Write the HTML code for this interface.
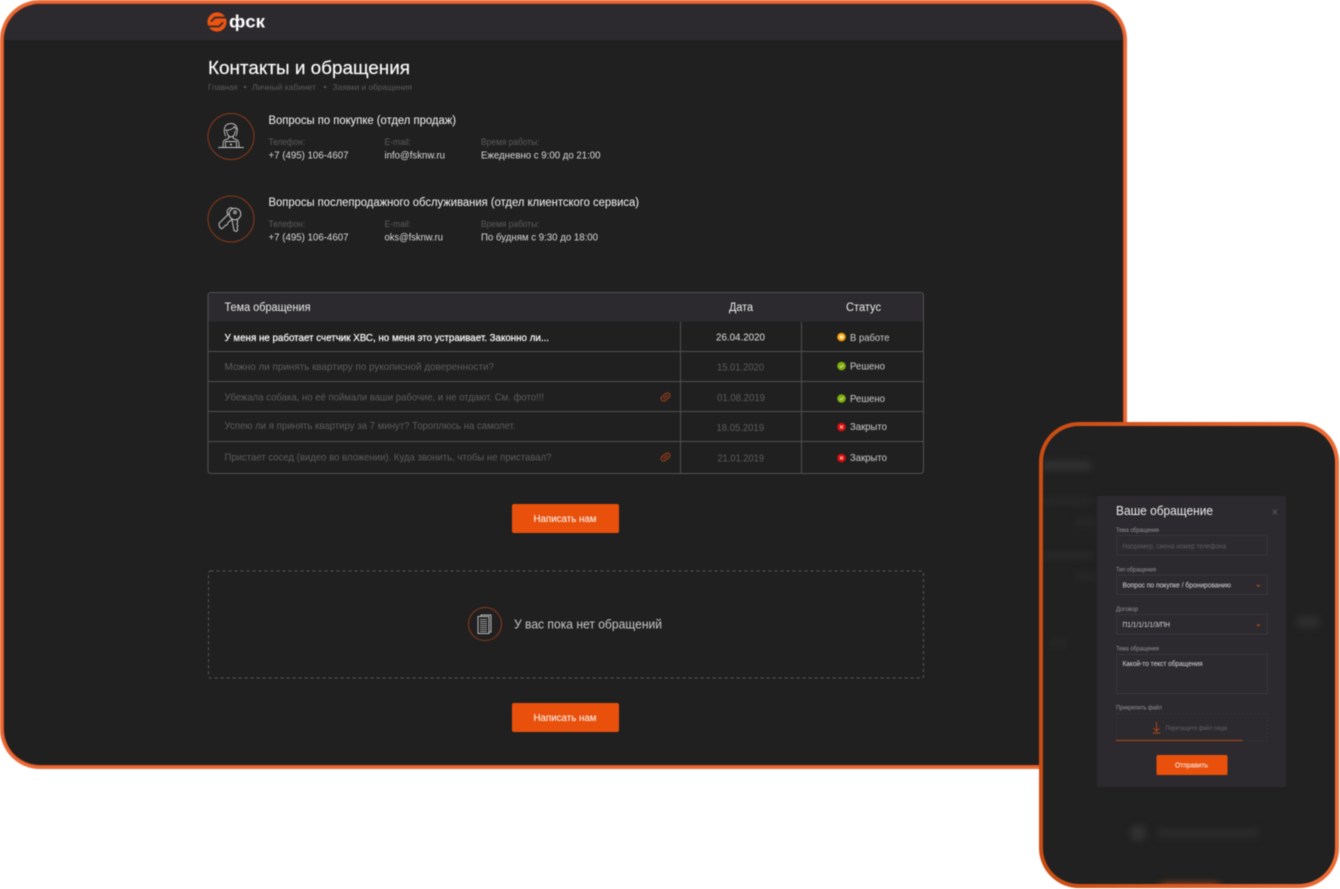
<!DOCTYPE html>
<html lang="ru"><head><meta charset="utf-8"><title>Контакты и обращения</title>
<style>
html,body{margin:0;padding:0;background:#fff;width:1340px;height:889px;overflow:hidden}
svg{display:block;position:absolute;left:0;top:0}
text{font-family:"Liberation Sans",sans-serif}
</style></head><body>
<svg width="1340" height="889" viewBox="0 0 1340 889" xmlns="http://www.w3.org/2000/svg">
<defs>
<filter id="b3" x="-50%" y="-200%" width="200%" height="500%" color-interpolation-filters="sRGB"><feGaussianBlur stdDeviation="3.500"/></filter>
<filter id="b5" x="-50%" y="-200%" width="200%" height="500%" color-interpolation-filters="sRGB"><feGaussianBlur stdDeviation="4"/></filter>
<filter id="s" x="-2%" y="-2%" width="104%" height="104%" color-interpolation-filters="sRGB"><feGaussianBlur stdDeviation="0.4"/></filter>
<clipPath id="mainClip"><rect x="4" y="4" width="1119" height="761" rx="36"/></clipPath>
<clipPath id="phoneClip"><rect x="1043" y="426" width="292" height="458" rx="36"/></clipPath>
<linearGradient id="pb" x1="0" y1="0" x2="1" y2="0"><stop offset="0" stop-color="#c94c12"/><stop offset="1" stop-color="#ee6a35"/></linearGradient>
</defs>
<g filter="url(#s)">
<!-- main frame -->
<rect x="0" y="0" width="1127" height="769" rx="40" fill="#ea6a38"/>
<rect x="3" y="3" width="1121" height="763" rx="37" fill="#d5531c"/>
<rect x="4" y="4" width="1119" height="761" rx="36" fill="#202020"/>
<g clip-path="url(#mainClip)"><rect x="0" y="0" width="1127" height="40" fill="#2c2a2e"/></g>

<!-- logo -->
<circle cx="217" cy="22" r="9.600" fill="#ec5410"/>
<path d="M228 17.500H215L211 21.500M206 26.500H219L223 22.500" fill="none" stroke="#2c2a2e" stroke-width="1.800"/>
<text x="229" y="27.500" font-size="17.500" font-weight="700" fill="#fff" textLength="36" lengthAdjust="spacingAndGlyphs">фск</text>

<!-- heading -->
<text x="208" y="74" font-size="18.500" fill="#fff" stroke="#fff" stroke-width=".15" textLength="202" lengthAdjust="spacingAndGlyphs">Контакты и обращения</text>
<g font-size="8.500" fill="#5a5a5a">
<text x="208" y="90" textLength="29.500" lengthAdjust="spacingAndGlyphs">Главная</text>
<circle cx="245" cy="87" r="1.200" stroke="none"/>
<text x="252" y="90" textLength="64" lengthAdjust="spacingAndGlyphs">Личный кабинет</text>
<circle cx="325" cy="87" r="1.200" stroke="none"/>
<text x="332.500" y="90" textLength="79.500" lengthAdjust="spacingAndGlyphs">Заявки и обращения</text>
</g>

<!-- contact 1 -->
<circle cx="231" cy="136.500" r="23" fill="none" stroke="#8c3a17" stroke-width="1"/>
<g fill="none" stroke="#c4c4c4" stroke-width=".9" stroke-linecap="round" stroke-linejoin="round">
<path d="M218.500 147.500H243.500"/>
<path d="M225.500 136C223 130 224 123.500 231 123.500C237.500 123.500 238.500 130 236 136"/>
<path d="M225.500 130C229.500 130.500 233 129 234.500 126.500C235.500 128.500 236.500 129.500 237 130"/>
<path d="M226.800 131C227 134.500 228.800 137 231 137C233.200 137 235 134.500 235.200 131"/>
<path d="M228.800 136.800V138.300L225 139.800C223.500 140.500 223 141.500 223 147.500M233.200 136.800V138.300L237 139.800C238.500 140.500 239 141.500 239 147.500"/>
<path d="M225.500 147.500V141.500H236.500V147.500"/>
<path d="M230.200 144.500H231.800M231 143.700V145.300"/>
</g>
<text x="268.500" y="124" font-size="11.500" fill="#f6f6f6" textLength="187.500" lengthAdjust="spacingAndGlyphs">Вопросы по покупке (отдел продаж)</text>
<g font-size="9" fill="#5c5c5c">
<text x="268.500" y="145" textLength="36.500" lengthAdjust="spacingAndGlyphs">Телефон:</text>
<text x="384.500" y="145" textLength="26.500" lengthAdjust="spacingAndGlyphs">E-mail:</text>
<text x="481" y="145" textLength="58.500" lengthAdjust="spacingAndGlyphs">Время работы:</text>
</g>
<g font-size="10.500" fill="#dadada">
<text x="268.500" y="158.500" textLength="80" lengthAdjust="spacingAndGlyphs">+7 (495) 106-4607</text>
<text x="384.500" y="158.500" textLength="60.500" lengthAdjust="spacingAndGlyphs">info@fsknw.ru</text>
<text x="481" y="158.500" textLength="119.500" lengthAdjust="spacingAndGlyphs">Ежедневно с 9:00 до 21:00</text>
</g>

<!-- contact 2 -->
<circle cx="231" cy="219" r="23" fill="none" stroke="#8c3a17" stroke-width="1"/>
<g fill="none" stroke="#c4c4c4" stroke-width="1" stroke-linecap="round" stroke-linejoin="round">
<path d="M228.500 214L219 223.500L219.500 227L221.500 228.800L223.500 227.500L225 225.500L227 225L228 222.500L231 220"/>
<path d="M227.500 214C226 209.500 230 206.500 233 208.500"/>
<circle cx="235" cy="214" r="5.800"/>
<circle cx="235" cy="212.300" r="1.300"/>
<path d="M231.800 219L234 230.500L236.500 231.500L237.800 229.800L237 227.500L238 226L236.800 224L237.600 222.500L237.500 219.300"/>
</g>
<text x="268.500" y="206" font-size="11.500" fill="#f6f6f6" textLength="370.500" lengthAdjust="spacingAndGlyphs">Вопросы послепродажного обслуживания (отдел клиентского сервиса)</text>
<g font-size="9" fill="#5c5c5c">
<text x="268.500" y="227" textLength="36.500" lengthAdjust="spacingAndGlyphs">Телефон:</text>
<text x="384.500" y="227" textLength="26.500" lengthAdjust="spacingAndGlyphs">E-mail:</text>
<text x="481" y="227" textLength="58.500" lengthAdjust="spacingAndGlyphs">Время работы:</text>
</g>
<g font-size="10.500" fill="#dadada">
<text x="268.500" y="240.500" textLength="80" lengthAdjust="spacingAndGlyphs">+7 (495) 106-4607</text>
<text x="384.500" y="240.500" textLength="58.500" lengthAdjust="spacingAndGlyphs">oks@fsknw.ru</text>
<text x="481" y="240.500" textLength="117" lengthAdjust="spacingAndGlyphs">По будням с 9:30 до 18:00</text>
</g>

<!-- table -->
<path d="M208.500 321.500V296a3 3 0 0 1 3-3H920a3 3 0 0 1 3 3v25.500Z" fill="#2c2a2e"/>
<rect x="208" y="292.500" width="715.500" height="181" rx="3" fill="none" stroke="#525252" stroke-width="1"/>
<path d="M208.500 351.500H923.500M208.500 381.500H923.500M208.500 411.500H923.500M208.500 441.500H923.500M680.500 322V473M801.500 322V473" stroke="#505050" stroke-width="1" fill="none"/>
<g font-size="11.500" fill="#ececec">
<text x="224.500" y="311" textLength="86" lengthAdjust="spacingAndGlyphs">Тема обращения</text>
<text x="729" y="311" textLength="24" lengthAdjust="spacingAndGlyphs">Дата</text>
<text x="846" y="311" textLength="35" lengthAdjust="spacingAndGlyphs">Статус</text>
</g>
<text x="224.500" y="341" font-size="10.500" fill="#fff" stroke="#fff" stroke-width=".2" textLength="324.500" lengthAdjust="spacingAndGlyphs">У меня не работает счетчик ХВС, но меня это устраивает. Законно ли...</text>
<g font-size="10.500" fill="#5c5c5c">
<text x="224.500" y="370" textLength="269.500" lengthAdjust="spacingAndGlyphs">Можно ли принять квартиру по рукописной доверенности?</text>
<text x="224.500" y="400.500" textLength="319.500" lengthAdjust="spacingAndGlyphs">Убежала собака, но её поймали ваши рабочие, и не отдают. См. фото!!!</text>
<text x="224.500" y="429" textLength="291" lengthAdjust="spacingAndGlyphs">Успею ли я принять квартиру за 7 минут? Тороплюсь на самолет.</text>
<text x="224.500" y="460.500" textLength="327" lengthAdjust="spacingAndGlyphs">Пристает сосед (видео во вложении). Куда звонить, чтобы не приставал?</text>
<text x="717" y="370.500" textLength="47" lengthAdjust="spacingAndGlyphs">15.01.2020</text>
<text x="717" y="401" textLength="48" lengthAdjust="spacingAndGlyphs">01.08.2019</text>
<text x="716.500" y="431" textLength="47.500" lengthAdjust="spacingAndGlyphs">18.05.2019</text>
<text x="717.500" y="461.500" textLength="46.500" lengthAdjust="spacingAndGlyphs">21.01.2019</text>
</g>
<text x="716" y="340.500" font-size="10.500" fill="#e0e0e0" textLength="49" lengthAdjust="spacingAndGlyphs">26.04.2020</text>
<!-- clips -->
<g fill="none" stroke="#8a3a18" stroke-width="1.400">
<g transform="rotate(-40 665.500 397)"><rect x="660.500" y="394.500" width="10" height="5" rx="2.500"/><path d="M662.800 397H668.500"/></g>
<g transform="rotate(-40 665.500 457)"><rect x="660.500" y="454.500" width="10" height="5" rx="2.500"/><path d="M662.800 457H668.500"/></g>
</g>
<!-- statuses -->
<circle cx="841.500" cy="337" r="4.300" fill="#f5a20a"/><circle cx="841.500" cy="337" r="2" fill="#ffe9b8"/>
<circle cx="841.500" cy="366" r="4.300" fill="#7fae0e"/><path d="M839.800 366.200L841 367.400L843.300 364.800" fill="none" stroke="#dbe9b0" stroke-width=".9"/>
<circle cx="841.500" cy="398.500" r="4.300" fill="#7fae0e"/><path d="M839.800 398.700L841 399.900L843.300 397.300" fill="none" stroke="#dbe9b0" stroke-width=".9"/>
<circle cx="841.500" cy="427" r="4.300" fill="#d90d0d"/><path d="M840 425.500L843 428.500M843 425.500L840 428.500" stroke="#f6c8c8" stroke-width=".9"/>
<circle cx="841.500" cy="458" r="4.300" fill="#d90d0d"/><path d="M840 456.500L843 459.500M843 456.500L840 459.500" stroke="#f6c8c8" stroke-width=".9"/>
<g font-size="10.500" fill="#cccccc">
<text x="850" y="341" textLength="39.500" lengthAdjust="spacingAndGlyphs">В работе</text>
<text x="850" y="369.500" textLength="35" lengthAdjust="spacingAndGlyphs">Решено</text>
<text x="850" y="402" textLength="35" lengthAdjust="spacingAndGlyphs">Решено</text>
<text x="850" y="430" textLength="37" lengthAdjust="spacingAndGlyphs">Закрыто</text>
<text x="850" y="461" textLength="37" lengthAdjust="spacingAndGlyphs">Закрыто</text>
</g>

<!-- buttons -->
<rect x="512" y="504" width="107" height="29" rx="2" fill="#e8500c"/>
<text x="533.500" y="522" font-size="10" fill="#fff" textLength="63" lengthAdjust="spacingAndGlyphs">Написать нам</text>
<rect x="512" y="703" width="107" height="29" rx="2" fill="#e8500c"/>
<text x="533.500" y="721" font-size="10" fill="#fff" textLength="63" lengthAdjust="spacingAndGlyphs">Написать нам</text>

<!-- empty box -->
<rect x="208.500" y="571" width="715" height="107" rx="2" fill="none" stroke="#585858" stroke-width="1" stroke-dasharray="3 3"/>
<circle cx="485" cy="624" r="16.500" fill="none" stroke="#8c3a17" stroke-width="1"/>
<g fill="none" stroke="#b8b8b8" stroke-width="1">
<path d="M481 616.500V615H491V632H489"/>
<rect x="478" y="616.500" width="11" height="17"/>
<path d="M480 619.500H487M480 621.500H487M480 623.500H487M480 625.500H487M480 627.500H487M480 629.500H487M480 631.500H487" stroke-width=".8"/>
</g>
<text x="514" y="628.500" font-size="12.500" fill="#c8c8c8" textLength="148" lengthAdjust="spacingAndGlyphs">У вас пока нет обращений</text>

<!-- phone -->
<rect x="1039" y="422" width="300" height="466" rx="40" fill="url(#pb)"/>
<rect x="1043" y="426" width="292" height="458" rx="36" fill="#212121"/>
<g clip-path="url(#phoneClip)">
<rect x="1043" y="461" width="48" height="9" fill="#323232" filter="url(#b3)"/>
<rect x="1043" y="499" width="50" height="5" fill="#2a2a2a" filter="url(#b3)"/>
<rect x="1075" y="519" width="22" height="6" fill="#292929" filter="url(#b3)"/>
<rect x="1043" y="553" width="50" height="5" fill="#2c2c2c" filter="url(#b3)"/>
<rect x="1075" y="574" width="22" height="6" fill="#292929" filter="url(#b3)"/>
<rect x="1050" y="640" width="16" height="6" fill="#292929" filter="url(#b3)"/>
<rect x="1296" y="616" width="24" height="12" rx="6" fill="#2e2e2e" filter="url(#b3)"/>
<circle cx="1138" cy="833" r="8" fill="#323232" filter="url(#b3)"/>
<rect x="1158" y="829" width="100" height="8" fill="#2c2c2c" filter="url(#b3)"/>
<rect x="1160" y="884" width="60" height="12" rx="4" fill="#b04a1a" filter="url(#b5)"/>
</g>

<!-- modal -->
<rect x="1097" y="496" width="189" height="291" rx="2" fill="#2c2a2e"/>
<text x="1116" y="515" font-size="12.500" fill="#ececec" textLength="97" lengthAdjust="spacingAndGlyphs">Ваше обращение</text>
<path d="M1272.700 509.700L1277.300 514.300M1277.300 509.700L1272.700 514.300" stroke="#5d5b5f" stroke-width=".9"/>
<g font-size="6" fill="#969498">
<text x="1116" y="532" textLength="43" lengthAdjust="spacingAndGlyphs">Тема обращения</text>
<text x="1116" y="571.500" textLength="40" lengthAdjust="spacingAndGlyphs">Тип обращения</text>
<text x="1116" y="611" textLength="22" lengthAdjust="spacingAndGlyphs">Договор</text>
<text x="1116" y="650.500" textLength="43" lengthAdjust="spacingAndGlyphs">Тема обращения</text>
<text x="1116" y="709.500" textLength="46" lengthAdjust="spacingAndGlyphs">Прикрепить файл</text>
</g>
<g fill="none" stroke="#38363a" stroke-width="1">
<rect x="1116.500" y="535.500" width="151" height="19.500" rx="1"/>
<rect x="1116.500" y="575" width="151" height="19.500" rx="1"/>
<rect x="1116.500" y="614.500" width="151" height="19.500" rx="1"/>
<rect x="1116.500" y="654.500" width="151" height="39" rx="1"/>
<rect x="1116.500" y="713.500" width="151" height="27" rx="1" stroke-dasharray="2 2"/>
</g>
<text x="1122.500" y="548.500" font-size="7" fill="#5e5c60" textLength="103.500" lengthAdjust="spacingAndGlyphs">Например, смена номер телефона</text>
<g font-size="7" fill="#dcdcdc">
<text x="1122.500" y="587.500" textLength="108.500" lengthAdjust="spacingAndGlyphs">Вопрос по покупке / бронированию</text>
<text x="1122.500" y="627" textLength="47.500" lengthAdjust="spacingAndGlyphs">П1/1/1/1/1/3/ПН</text>
<text x="1122.500" y="666" textLength="80" lengthAdjust="spacingAndGlyphs">Какой-то текст обращения</text>
</g>
<path d="M1256.800 585L1258.300 586.300L1259.800 585M1256.800 624.500L1258.300 625.800L1259.800 624.500" fill="none" stroke="#c44a14" stroke-width="1"/>
<path d="M1156.500 722V731M1153.500 728L1156.500 731.300L1159.500 728M1152.700 733H1160.300" fill="none" stroke="#b8481a" stroke-width=".9"/>
<text x="1165.500" y="730" font-size="6.500" fill="#646266" textLength="61.500" lengthAdjust="spacingAndGlyphs">Перетащите файл сюда</text>
<rect x="1116" y="740" width="126.500" height="1" fill="#b8481a"/>
<rect x="1156.500" y="755" width="71" height="20" rx="1.500" fill="#e8500c"/>
<text x="1175" y="767.500" font-size="7.500" fill="#fff" textLength="33" lengthAdjust="spacingAndGlyphs">Отправить</text>
</g>
</svg>
</body></html>
